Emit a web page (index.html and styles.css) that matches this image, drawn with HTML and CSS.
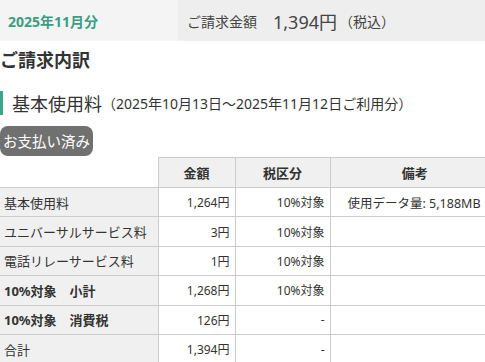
FILE: index.html
```html
<!DOCTYPE html>
<html lang="ja">
<head>
<meta charset="utf-8">
<link rel="stylesheet" href="styles.css">
</head>
<body>
<div class="topbar">
  <div class="month">2025年11月分</div>
  <div class="total"><span class="total-label">ご請求金額</span><span class="total-amount">1,394円</span><span class="total-tax">（税込）</span></div>
</div>
<h2 class="title">ご請求内訳</h2>
<h3 class="section"><span class="section-main">基本使用料</span><span class="section-sub">（2025年10月13日～2025年11月12日ご利用分）</span></h3>
<div class="badge">お支払い済み</div>
<table class="bill">
  <thead>
    <tr><th class="blank"></th><th class="c-amt">金額</th><th class="c-tax">税区分</th><th class="c-note">備考</th></tr>
  </thead>
  <tbody>
    <tr><td class="lbl">基本使用料</td><td class="num">1,264円</td><td class="num">10%対象</td><td class="note">使用データ量: 5,188MB</td></tr>
    <tr><td class="lbl">ユニバーサルサービス料</td><td class="num">3円</td><td class="num">10%対象</td><td class="note"></td></tr>
    <tr><td class="lbl">電話リレーサービス料</td><td class="num">1円</td><td class="num">10%対象</td><td class="note"></td></tr>
    <tr><td class="lbl bold">10%対象　小計</td><td class="num">1,268円</td><td class="num">10%対象</td><td class="note"></td></tr>
    <tr><td class="lbl bold">10%対象　消費税</td><td class="num">126円</td><td class="num">-</td><td class="note"></td></tr>
    <tr><td class="lbl">合計</td><td class="num">1,394円</td><td class="num">-</td><td class="note"></td></tr>
  </tbody>
</table>
</body>
</html>
```
FILE: styles.css
```css
html, body {
  margin: 0;
  padding: 0;
  overflow: hidden;
}
body {
  font-family: "Noto Sans", "Noto Sans CJK JP", sans-serif;
  color: #333;
  background: #fff;
  width: 485px;
}
.topbar {
  display: flex;
  height: 41px;
}
.month {
  width: 178px;
  background: #f4f4f4;
  color: #3a9e84;
  font-weight: bold;
  font-size: 14px;
  padding-left: 8px;
  box-sizing: border-box;
  display: flex;
  align-items: center;
}
.total {
  flex: 1;
  background: #eeeeee;
  display: flex;
  align-items: center;
  padding-left: 9px;
  color: #444;
}
.total-label {
  font-size: 14px;
  margin-right: 16px;
}
.total-amount {
  font-size: 18px;
}
.total-tax {
  font-size: 14px;
  margin-left: 2px;
}
.title {
  margin: 7px 0 0;
  font-size: 18px;
  line-height: 24px;
  font-weight: bold;
  color: #333;
}
.section {
  margin: 19px 0 0;
  border-left: 3px solid #3aa58a;
  padding-left: 9px;
  height: 24px;
  display: flex;
  align-items: center;
  font-weight: normal;
  color: #333;
}
.section-main {
  font-size: 18px;
}
.section-sub {
  font-size: 14px;
}
.badge {
  display: inline-block;
  margin-top: 11px;
  background: #707070;
  color: #fff;
  font-size: 14.5px;
  line-height: 30px;
  height: 30px;
  padding: 0 3px;
  border-radius: 8px;
}
.bill {
  display: table;
  margin-top: 1px;
  border-collapse: collapse;
  width: 500px;
  table-layout: fixed;
  font-size: 12px;
}
.bill th, .bill td {
  border: 1px solid #cccccc;
  height: 29.4px;
  padding: 0 5px;
  box-sizing: border-box;
  white-space: nowrap;
}
.bill th {
  background: #f0f0f0;
  font-weight: bold;
  font-size: 13px;
  text-align: center;
  height: 30px;
}
.bill th.blank {
  background: #fff;
  border-top: none;
  border-left: none;
  width: 158px;
}
.c-amt { width: 77px; }
.c-tax { width: 95px; }
.bill td.lbl {
  background: #f0f0f0;
  border-left: none;
  padding-left: 4px;
  font-size: 13px;
}
.bill td.bold {
  font-weight: bold;
}
.bill td.num {
  text-align: right;
}
.bill td.note {
  padding-left: 17px;
  font-size: 12.5px;
}
```
